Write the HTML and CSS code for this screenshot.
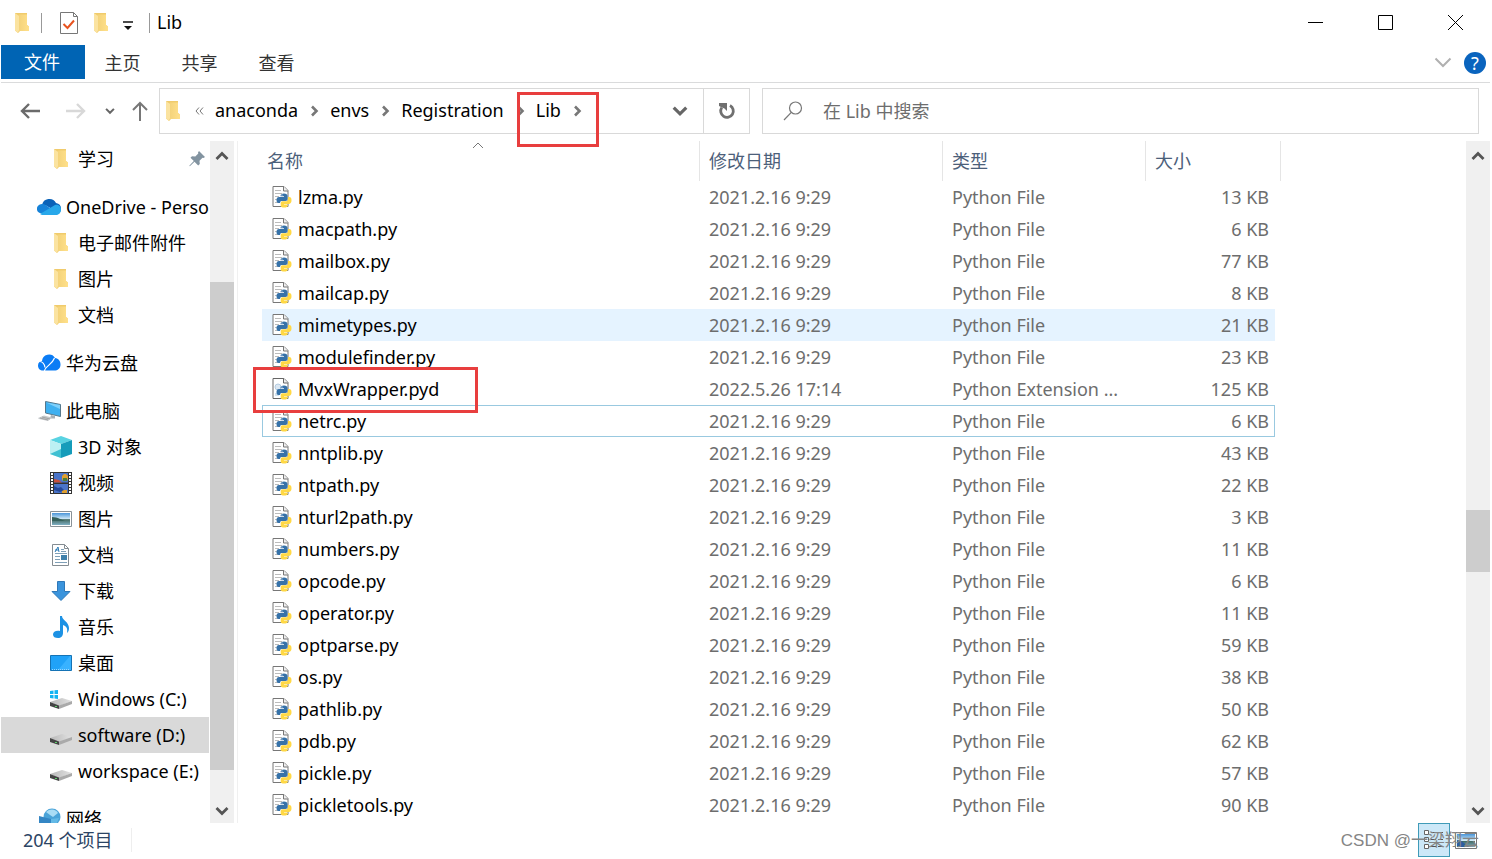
FILE: index.html
```html
<!DOCTYPE html>
<html lang="zh-CN">
<head>
<meta charset="utf-8">
<title>Lib</title>
<link rel="stylesheet" href="styles.css">
</head>
<body>
<svg class="sprite" aria-hidden="true">
  <defs>
    <linearGradient id="g-folder" x1="0" y1="0" x2="1" y2="0"><stop offset="0" stop-color="#f3d27a"/><stop offset="1" stop-color="#ffe08a"/></linearGradient>
    <linearGradient id="g-sea" x1="0" y1="0" x2="0" y2="1"><stop offset="0" stop-color="#4a95d8"/><stop offset=".5" stop-color="#d3ebf8"/><stop offset=".55" stop-color="#446a62"/><stop offset="1" stop-color="#7fb0c4"/></linearGradient>
    <linearGradient id="g-drive" x1="0" y1="0" x2="1" y2="0"><stop offset="0" stop-color="#b8b8b8"/><stop offset="1" stop-color="#e2e2e2"/></linearGradient>
  </defs>
  <symbol id="folder" viewBox="0 0 16 22"><path d="M1 1h12v12l2 1.500V19H6l-2 2-3-2.500z" fill="#f0cb6c"/><path d="M5 2.500h8V13l2 1.500V19H4V4z" fill="url(#g-folder)"/><path d="M1 1l4 3v14l-1 3-3-2.500z" fill="#fbe3a0"/></symbol>
  <symbol id="py" viewBox="0 0 20 22">
    <path d="M1 .5h11l4 4v16H1z" fill="#fff" stroke="#777"/><path d="M11.500.5v4.500H16" fill="#eee" stroke="#777"/>
    <path d="M3 4.500h6M3 7.500h7M3 10.500h4M3 13.500h2M3 16.500h3" stroke="#bbb"/>
    <use href="#snakes"/>
  </symbol>
  <symbol id="pyd" viewBox="0 0 20 22">
    <path d="M1 .5h11l4 4v16H1z" fill="#fff" stroke="#666"/><path d="M11.500.5v4.500H16" fill="#eee" stroke="#666"/>
    <circle cx="6" cy="9" r="3" fill="#dbe7f2" stroke="#b4cbdf"/><path d="M3 15h4v3H3z" fill="#d4e3ef"/>
    <use href="#snakes"/>
  </symbol>
  <g id="snakes">
    <path d="M8.500 10q0-2.500 3.500-2.500t3.500 2.500v3q0 2-2 2H9.500q-1.500 0-1.500 2H6.500Q4.500 17 4.500 14t2.500-3h5v-.7H8.500z" fill="#3672a9"/>
    <path d="M16 11h1.200q2.300 0 2.300 3.200T17 18h-5v.6h3.700v1q0 2-3.500 2t-3.500-2V17q0-1.700 1.800-1.700h4Q16 15.300 16 13z" fill="#ffd845"/>
    <circle cx="10" cy="9" r=".6" fill="#fff"/>
  </g>
  <symbol id="drive" viewBox="0 0 22 16"><path d="M0 8l12-4 10 3-13 5z" fill="url(#g-drive)"/><path d="M0 8l9 3.500V15l-9-3z" fill="#444"/><path d="M9 11.500L22 7v3L9 15z" fill="#aaa"/><path d="M5 12.500h2" stroke="#5fd16c"/></symbol>
  <symbol id="chev-r" viewBox="0 0 10 12"><path d="M2 1.500L6.500 6 2 10.500" fill="none" stroke="#777" stroke-width="2.600"/></symbol>
  <symbol id="chev-d" viewBox="0 0 14 10"><path d="M1.500 2L7 7.500 12.500 2" fill="none" stroke="currentColor" stroke-width="2.800"/></symbol>
  <symbol id="chev-u" viewBox="0 0 14 10"><path d="M1.500 8L7 2.500 12.500 8" fill="none" stroke="currentColor" stroke-width="2.800"/></symbol>
</svg>

<div class="window">
  <header class="titlebar">
    <svg class="i-folder"><use href="#folder"/></svg>
    <span class="rule rule-a"></span>
    <button class="plain" aria-label="属性"><svg class="i-check" viewBox="0 0 18 22"><path d="M.5.500h13l4 4v17H.5z" fill="#fff" stroke="#777"/><path d="M13.500.5v4h4" fill="none" stroke="#777"/><path d="M3.500 12l4 4L14 8.500" fill="none" stroke="#e8531f" stroke-width="2"/></svg></button>
    <button class="plain new-folder" aria-label="新建文件夹"><svg class="i-folder"><use href="#folder"/></svg></button>
    <button class="plain customize" aria-label="自定义快速访问工具栏"><svg class="i-menu" viewBox="0 0 10 10"><path d="M0 1h10" stroke="#111" stroke-width="1.500"/><path d="M1 5h8L5 9z" fill="#111"/></svg></button>
    <span class="rule rule-b"></span>
    <h1 class="title">Lib</h1>
    <div class="winbtns">
      <button class="plain" aria-label="最小化"><svg class="i-win" viewBox="0 0 15 15"><path d="M0 7.500h15" stroke="#000"/></svg></button>
      <button class="plain" aria-label="最大化"><svg class="i-win" viewBox="0 0 15 15"><path d="M.5.500h14v14H.5z" fill="none" stroke="#000"/></svg></button>
      <button class="plain" aria-label="关闭"><svg class="i-win" viewBox="0 0 15 15"><path d="M0 0l15 15M15 0L0 15" stroke="#000"/></svg></button>
    </div>
  </header>

  <nav class="ribbon">
    <button class="tab tab-file">文件</button>
    <button class="tab">主页</button>
    <button class="tab">共享</button>
    <button class="tab">查看</button>
    <button class="plain expand" aria-label="展开功能区"><svg class="i-expand" viewBox="0 0 18 11"><path d="M1.500 1.500L9 9l7.500-7.500" fill="none" stroke="#b0b0b0" stroke-width="2"/></svg></button>
    <button class="help" aria-label="帮助">?</button>
  </nav>

  <div class="address-row">
    <div class="history">
      <button class="plain" aria-label="后退"><svg class="i-arrow" viewBox="0 0 20 16"><path d="M20 8H2M9 1L2 8l7 7" fill="none" stroke="#6b6b6b" stroke-width="2.400"/></svg></button>
      <button class="plain forward" aria-label="前进"><svg class="i-arrow" viewBox="0 0 20 16"><path d="M0 8h18M11 1l7 7-7 7" fill="none" stroke="#d8d8d8" stroke-width="2.400"/></svg></button>
      <button class="plain recent" aria-label="最近的位置"><svg class="i-recent"><use href="#chev-d"/></svg></button>
      <button class="plain up" aria-label="上移"><svg class="i-up" viewBox="0 0 16 20"><path d="M8 20V2M1 9l7-7 7 7" fill="none" stroke="#777" stroke-width="2"/></svg></button>
    </div>
    <div class="address">
      <svg class="i-folder"><use href="#folder"/></svg>
      <svg class="i-more" viewBox="0 0 9 8"><path d="M4 .5L1 4l3 3.500M8 .5L5 4l3 3.500" fill="none" stroke="#777"/></svg>
      <button class="crumb">anaconda</button><svg class="i-chev"><use href="#chev-r"/></svg>
      <button class="crumb">envs</button><svg class="i-chev"><use href="#chev-r"/></svg>
      <button class="crumb">Registration</button><svg class="i-chev"><use href="#chev-r"/></svg>
      <span class="marked"><button class="crumb">Lib</button><svg class="i-chev"><use href="#chev-r"/></svg><span class="mark mark-crumb"></span></span>
      <button class="plain drop" aria-label="以前的位置"><svg class="i-drop"><use href="#chev-d"/></svg></button>
      <button class="plain refresh" aria-label="刷新"><svg class="i-refresh" viewBox="0 0 18 18"><path d="M12 3.500A6.300 6.300 0 1 1 3.800 5.500" fill="none" stroke="#707070" stroke-width="2.800"/><path d="M1 1h8v8L6.500 6.500 4 5.500 1 4z" fill="#707070"/></svg></button>
    </div>
    <label class="search">
      <svg class="i-search" viewBox="0 0 20 20"><circle cx="12.500" cy="7" r="6" fill="none" stroke="#777" stroke-width="1.200"/><path d="M8.300 11.300L1 19" stroke="#777" stroke-width="1.200"/></svg>
      <input type="text" placeholder="在 Lib 中搜索" aria-label="在 Lib 中搜索">
    </label>
  </div>

  <div class="body">
    <aside class="side">
      <ul class="tree">
        <li class="node child"><svg class="i-node"><use href="#folder"/></svg>学习<svg class="i-pin" viewBox="0 0 16 16"><path d="M10 0l6 6-1.500 1-1-.3-3 3 .3 3.300-1.600 1.500-3.700-3.700L.8 15.300l-.5-.5L4.800 10 1.500 6.700 3 5.300l3.300.3 3-3L9 1.400z" fill="#8293a0"/></svg></li>
        <li class="node gap"><svg class="i-node" viewBox="0 0 24 22"><path d="M5 9a7.500 7.500 0 0 1 14-2 6 6 0 0 1 5 6c0 2-1 3-2 4L8 9z" fill="#0a62b8"/><path d="M0 14a5 5 0 0 1 5-6c2 0 3 .5 5 2l10 7H5a4 4 0 0 1-5-3z" fill="#1682d8"/><path d="M3 18l10-6 5-3c4-1 6 2 6 4.500 0 3-2 5.500-5 5.500H5z" fill="#28a8ea"/></svg>OneDrive - Personal</li>
        <li class="node child"><svg class="i-node"><use href="#folder"/></svg>电子邮件附件</li>
        <li class="node child"><svg class="i-node"><use href="#folder"/></svg>图片</li>
        <li class="node child"><svg class="i-node"><use href="#folder"/></svg>文档</li>
        <li class="node gap"><svg class="i-node" viewBox="0 0 24 22"><path d="M5 9a7 7 0 0 1 13-3c3.500.5 5.500 3 5.500 6.500 0 4-3 6-6 6H6c-3 0-5-2-5-5S3 9 5 9z" fill="#0a7cf5"/><path d="M7.500 19C8 14 15 13 17.500 6M2.500 9.500c3 0 5 3 5.500 6" fill="none" stroke="#fff" stroke-width="1.200"/></svg>华为云盘</li>
        <li class="node gap"><svg class="i-node" viewBox="0 0 24 22"><path d="M8.500 1.500l15 3v12l-15-3.500z" fill="#3fb0f0" stroke="#56788c"/><path d="M9 2.500l14 2.500v4z" fill="#7fd0fa"/><path d="M14 15l4 1v2.500h-5z" fill="#a8b0b5"/><path d="M1 18l6-2.500 8 2L11 21l-9-2z" fill="#c6cacc"/><path d="M3 18l8 2M5 17l8 2" stroke="#888" stroke-width=".6"/></svg>此电脑</li>
        <li class="node child"><svg class="i-node" viewBox="0 0 22 22"><path d="M0 4l11-4 11 4-11 4z" fill="#59d3e2"/><path d="M0 4l11 4v14L0 18z" fill="#bdf0f3"/><path d="M22 4L11 8v14l11-4z" fill="#159cba"/><path d="M0 18l11-5v9z" fill="#3fc0d2"/></svg>3D 对象</li>
        <li class="node child"><svg class="i-node" viewBox="0 0 22 22"><path d="M0 0h22v22H0z" fill="#333"/><path d="M4 1h14v9.500H4zM4 12h14v9H4z" fill="#4a74c8"/><path d="M4 7l5 1 3 2.500H4z" fill="#c8503c"/><path d="M12 4l2-2h2l2 2v3l-2 2h-3l-1-2zM12 18h5v3h-5z" fill="#e0a030"/><path d="M13 6h4v3h-4z" fill="#4f7f35"/><path d="M4 14l4 2 3-1 3 3-4 2-6-2z" fill="#24489a"/><path d="M2 1v21M20 1v21" stroke="#fff" stroke-width="2" stroke-dasharray="2 1"/></svg>视频</li>
        <li class="node child"><svg class="i-node" viewBox="0 0 22 22"><path d="M.5 3.500h21v15H.5z" fill="#fff" stroke="#8a9298"/><path d="M2 5h18v12H2z" fill="url(#g-sea)"/><path d="M2 9c6 0 10 3 13 4H2z" fill="#35615c"/></svg>图片</li>
        <li class="node child"><svg class="i-node" viewBox="0 0 22 22"><path d="M2.500.5h12l4 4v17h-16z" fill="#fff" stroke="#848c92"/><path d="M14.500.5v4h4" fill="none" stroke="#848c92"/><path d="M5 8l3-5 1 5M5 6h4" fill="none" stroke="#2a7ab5"/><path d="M11 5.500h3M11 7.500h5M5 9.500h12M5 12.500h5M5 15.500h5M5 18.500h12" stroke="#7fa0b8"/><path d="M11 11h6v5h-6z" fill="#3f80aa"/></svg>文档</li>
        <li class="node child"><svg class="i-node" viewBox="0 0 22 22"><path d="M7.500 1.500h7v10H20l-9 9-9-9h5.500z" fill="#3b94dc" stroke="#2f78b8"/></svg>下载</li>
        <li class="node child"><svg class="i-node" viewBox="0 0 22 22"><path d="M10 0h2c0 4 7 6 7 12 0 3-1 4-2 5 1-5-1-7-4-8v8c0 3-2 5-5 5s-5-1-5-3.500S6 14 10 15z" fill="#1d92e4"/></svg>音乐</li>
        <li class="node child"><svg class="i-node" viewBox="0 0 22 22"><path d="M.5 3.500h21v15H.5z" fill="#20a2f8" stroke="#1573b5"/><path d="M8 18L20 4h1v14z" fill="#38b2ff"/><path d="M2 17.500h18" stroke="#9ad8ff" stroke-dasharray="1 1"/></svg>桌面</li>
        <li class="node child"><svg class="i-node" viewBox="0 0 22 22"><use href="#drive" y="6" width="22" height="16"/><path d="M0 3l3.500-.5V6H0zM4.500 2.300L8 2v4H4.500zM0 7h3.500v3.500L0 10zM4.500 7H8v4l-3.500-.4z" fill="#12b4f2"/></svg>Windows (C:)</li>
        <li class="node child selected"><svg class="i-node" viewBox="0 0 22 22"><use href="#drive" y="6" width="22" height="16"/></svg>software (D:)</li>
        <li class="node child"><svg class="i-node" viewBox="0 0 22 22"><use href="#drive" y="6" width="22" height="16"/></svg>workspace (E:)</li>
        <li class="node gap"><svg class="i-node" viewBox="0 0 24 22"><circle cx="15" cy="9" r="8.500" fill="#4aa3d8"/><path d="M9 4c4-4 10-3 12 1l-5 4-3-2z" fill="#a9dcf5"/><path d="M2 8l12 3v9L2 16z" fill="#3486c4"/><path d="M14 11l8-1-3 7-5 3z" fill="#63b9e6"/></svg>网络</li>
      </ul>
      <div class="scroll">
        <svg class="i-scroll"><use href="#chev-u"/></svg>
        <div class="track track-side"><div class="thumb"></div></div>
        <svg class="i-scroll"><use href="#chev-d"/></svg>
      </div>
    </aside>

    <main class="files">
      <div class="list">
        <table class="table">
          <colgroup><col class="c-name"><col class="c-date"><col class="c-type"><col class="c-size"><col class="c-end"></colgroup>
          <thead><tr><th class="sorted">名称<svg class="i-sort" viewBox="0 0 12 7"><path d="M1 6l5-5 5 5" fill="none" stroke="#777"/></svg></th><th>修改日期</th><th>类型</th><th class="h-size">大小</th><th class="h-end"></th></tr></thead>
          <tbody id="rows"></tbody>
        </table>
      </div>
      <div class="scroll">
        <svg class="i-scroll"><use href="#chev-u"/></svg>
        <div class="track track-main"><div class="thumb"></div></div>
        <svg class="i-scroll"><use href="#chev-d"/></svg>
      </div>
    </main>
  </div>

  <footer class="status">
    <span class="count">204 个项目</span>
    <div class="views">
      <button class="view on" aria-label="详细信息"><svg class="i-details" viewBox="0 0 22 22"><path d="M1.500 1.500h4v4h-4zM1.500 8.500h4v4h-4zM1.500 15.500h4v4h-4z" fill="#fff" stroke="#666"/><path d="M8 3.500h5m2 0h5M8 10.500h5m2 0h5M8 17.500h5m2 0h5" stroke="#555"/></svg></button>
      <button class="view" aria-label="大缩略图"><svg class="i-thumbs" viewBox="0 0 22 17"><path d="M.5.500h21v16H.5z" fill="#fff" stroke="#777"/><path d="M2 2h18v13H2z" fill="url(#g-sea)"/><path d="M2 8c5 0 8 4 12 7H2z" fill="#2d5da0"/></svg></button>
      <span class="watermark">CSDN @一梁翔云</span>
    </div>
  </footer>
</div>
<script src="files.js"></script>
</body>
</html>
```
FILE: styles.css
```css
* { box-sizing: border-box; }
body {
  margin: 0;
  background: #fff;
  color: #000;
  font: 18px/24px "Noto Sans", "Noto Sans CJK SC", sans-serif;
}
button, input { font: inherit; color: inherit; }
svg { display: block; flex: none; }
.sprite { position: absolute; width: 0; height: 0; }
.window {
  display: flex;
  flex-direction: column;
  height: 100vh;
  padding: 0 2px 0 1px;
  overflow: hidden;
}
.plain { display: flex; align-items: center; justify-content: center; padding: 0; border: 0; background: none; }

/* title bar */
.titlebar { display: flex; align-items: center; height: 45px; padding-left: 13px; flex: none; }
.i-folder { width: 16px; height: 22px; }
.i-check { width: 18px; height: 22px; }
.i-menu { width: 10px; height: 10px; }
.i-win { width: 15px; height: 15px; }
.rule { width: 1px; height: 20px; background: #999; }
.rule-a { margin: 0 18px 0 11px; }
.new-folder { margin-left: 15px; }
.customize { margin: 6px 16px 0 14px; }
.title { margin: 0 0 2px 7px; font-size: 18px; font-weight: 400; }
.winbtns { display: flex; margin-left: auto; }
.winbtns .plain { width: 70px; height: 45px; }

/* ribbon */
.ribbon { display: flex; align-items: center; height: 38px; padding-bottom: 3px; border-bottom: 1px solid #dadbdc; flex: none; }
.tab { height: 34px; width: 77px; padding: 2px 2px 0 0; border: 0; background: none; color: #333; }
.tab-file { width: 84px; padding-top: 0; background: #0064b4; color: #fff; }
.expand { margin-left: auto; }
.i-expand { width: 18px; height: 11px; }
.help { width: 22px; height: 22px; margin: 2px 4px 0 12px; padding: 0; border: 0; border-radius: 50%; background: #0a64be; color: #fff; line-height: 22px; }

/* address */
.address-row { display: flex; height: 58px; padding: 5px 11px 7px 0; flex: none; }
.history { display: flex; align-items: center; width: 158px; padding-left: 19px; flex: none; color: #666; }
.i-arrow { width: 20px; height: 16px; }
.forward { margin-left: 26px; }
.recent { margin-left: 19px; }
.i-recent { width: 10px; height: 8px; }
.up { margin-left: 17px; }
.i-up { width: 16px; height: 20px; }
.address { display: flex; align-items: center; width: 591px; padding-left: 5px; border: 1px solid #d9d9d9; flex: none; }
.i-more { width: 9px; height: 8px; margin: 0 11px 0 14px; }
.crumb { padding: 0 0 2px; border: 0; background: none; }
.i-chev { width: 10px; height: 12px; margin: 0 10px 0 12px; }
.marked { position: relative; display: flex; align-items: center; }
.mark { position: absolute; border: 3px solid #e83e3e; pointer-events: none; z-index: 2; }
.mark-crumb { top: -6px; left: -19px; width: 82px; height: 55px; }
.drop { margin-left: auto; width: 46px; height: 100%; color: #666; }
.i-drop { width: 16px; height: 12px; }
.refresh { width: 46px; height: 100%; border-left: 1px solid #d9d9d9; }
.i-refresh { width: 18px; height: 18px; }
.search { display: flex; flex: 1; align-items: center; margin-left: 12px; padding-left: 20px; border: 1px solid #d9d9d9; }
.i-search { width: 20px; height: 20px; }
.search input { flex: 1; min-width: 0; margin-left: 20px; padding: 0; border: 0; outline: 0; background: none; }
.search input::placeholder { color: #6d6d6d; opacity: 1; }

/* navigation tree */
.body { display: flex; flex: 1; min-height: 0; }
.side { display: flex; width: 237px; padding-right: 3px; border-right: 1px solid #f0f0f0; flex: none; }
.tree { flex: 1; min-width: 0; margin: 0; padding: 0; list-style: none; overflow: hidden; }
.node { display: flex; align-items: center; gap: 5px; height: 36px; padding-left: 36px; margin-right: 1px; overflow: hidden; white-space: nowrap; }
.child { gap: 6px; padding-left: 49px; }
.gap { margin-top: 12px; }
.selected { background: #d9d9d9; }
.i-node { width: 24px; height: 22px; }
.child .i-node { width: 22px; }
.i-pin { width: 16px; height: 16px; margin: 0 4px 0 auto; }
.scroll { display: flex; flex-direction: column; align-items: center; width: 24px; padding: 10px 0 7px; background: #f0f0f0; color: #555; flex: none; }
.i-scroll { width: 14px; height: 10px; }
.track { display: flex; flex-direction: column; flex: 1; width: 100%; }
.thumb { background: #cdcdcd; }
.track-side { padding-top: 121px; }
.track-side .thumb { height: 488px; }
.track-main { padding-top: 349px; }
.track-main .thumb { height: 62px; }

/* file list */
.files { display: flex; flex: 1; min-width: 0; }
.list { flex: 1; min-width: 0; padding-left: 24px; overflow: hidden; }
.table { width: 1019px; border-collapse: separate; border-spacing: 0; table-layout: fixed; color: #6d6d6d; }
.c-name { width: 438px; }
.c-date { width: 243px; }
.c-type { width: 203px; }
.c-size { width: 129px; }
.c-end { width: 6px; }
.table th { height: 40px; padding: 0 9px; border-right: 1px solid #e5e5e5; color: #4c607a; font-weight: 400; text-align: left; }
.table th.sorted { position: relative; padding-left: 5px; }
.table th.h-size { border-right: 0; }
.table th.h-end { padding: 0; }
.i-sort { position: absolute; top: 1px; left: 0; right: 6px; width: 12px; height: 7px; margin: 0 auto; }
.table td { height: 32px; padding: 0 9px; white-space: nowrap; overflow: hidden; text-overflow: ellipsis; }
.table td.size { padding-right: 6px; text-align: right; }
.table td.name { padding-left: 10px; overflow: visible; color: #000; }
.file { position: relative; display: flex; align-items: center; gap: 6px; }
.i-file { width: 20px; height: 22px; }
.mark-file { top: -10px; left: -19px; width: 225px; height: 46px; }
.hover td:not(.end) { background: #e5f3ff; }
.focus td:not(.end) { border: solid #99c9e0; border-width: 1px 0; }
.focus td.name { border-left-width: 1px; padding-left: 9px; }
.focus td.size { border-right-width: 1px; padding-right: 5px; }

/* status bar */
.status { display: flex; height: 36px; flex: none; color: #2b4464; }
.count { align-self: flex-start; margin-top: 5px; padding: 0 18px 0 22px; border-right: 1px solid #eee; }
.views { position: relative; display: flex; margin: 0 8px 2px auto; }
.view { display: flex; align-items: center; justify-content: center; width: 32px; padding: 0; border: 1px solid transparent; background: none; }
.view.on { border-color: #3f9bb8; background: #cce8f8; }
.i-details { width: 22px; height: 22px; }
.i-thumbs { width: 22px; height: 17px; }
.watermark { position: absolute; top: 6px; right: 3px; color: #858585; font-family: "Liberation Sans", "Noto Sans CJK SC", sans-serif; font-size: 17px; white-space: nowrap; }
```
FILE: files.js
```js
const files = [
  ["lzma.py", 13], ["macpath.py", 6], ["mailbox.py", 77], ["mailcap.py", 8],
  ["mimetypes.py", 21, "hover"], ["modulefinder.py", 23], ["MvxWrapper.pyd", 125],
  ["netrc.py", 6, "focus"], ["nntplib.py", 43], ["ntpath.py", 22],
  ["nturl2path.py", 3], ["numbers.py", 11], ["opcode.py", 6], ["operator.py", 11],
  ["optparse.py", 59], ["os.py", 38], ["pathlib.py", 50], ["pdb.py", 62],
  ["pickle.py", 57], ["pickletools.py", 90]
];

document.getElementById("rows").innerHTML = files.map(([name, size, state]) => {
  const ext = name.endsWith(".pyd");
  return `<tr class="${state || ""}">
    <td class="name"><span class="file"><svg class="i-file"><use href="#${ext ? "pyd" : "py"}"/></svg>${name}${ext ? '<span class="mark mark-file"></span>' : ""}</span></td>
    <td>${ext ? "2022.5.26 17:14" : "2021.2.16 9:29"}</td>
    <td>${ext ? "Python Extension ..." : "Python File"}</td>
    <td class="size">${size} KB</td>
    <td class="end"></td>
  </tr>`;
}).join("");
```
